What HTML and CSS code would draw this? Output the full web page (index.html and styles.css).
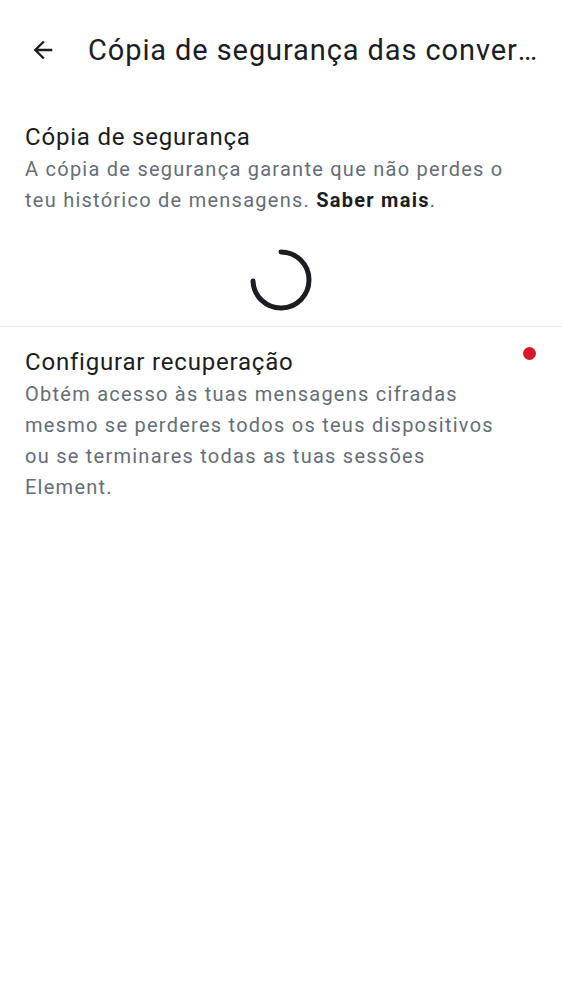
FILE: index.html
```html
<!DOCTYPE html>
<html lang="pt">
<head>
<meta charset="utf-8">
<link rel="stylesheet" href="styles.css">
</head>
<body>
<header class="topbar">
  <svg class="back" width="28" height="28" viewBox="0 0 24 24"><path d="M20 11H7.83l5.59-5.59L12 4l-8 8 8 8 1.41-1.41L7.83 13H20v-2z" fill="#1b1d22"/></svg>
  <h1 class="title">Cópia de segurança das conversas</h1>
</header>
<section class="item first">
  <div class="item-title">Cópia de segurança</div>
  <p class="item-desc">A cópia de segurança garante que não perdes o teu histórico de mensagens. <b>Saber mais</b>.</p>
</section>
<div class="spinner-wrap">
  <svg width="66" height="66" viewBox="0 0 66 66"><path d="M33 5 A28 28 0 1 1 5 34" fill="none" stroke="#1b1d22" stroke-width="5" stroke-linecap="round"/></svg>
</div>
<div class="divider"></div>
<section class="item second">
  <div class="item-title">Configurar recuperação</div>
  <p class="item-desc">Obtém acesso às tuas mensagens cifradas mesmo se perderes todos os teus dispositivos ou se terminares todas as tuas sessões Element.</p>
  <span class="dot"></span>
</section>
</body>
</html>
```
FILE: styles.css
```css
* { box-sizing: border-box; }
body {
  margin: 0;
  background: #fff;
  font-family: Roboto, "Noto Sans", sans-serif;
  color: #1b1d22;
}
.topbar {
  height: 100px;
  display: flex;
  align-items: center;
  padding: 0 20px 0 29px;
}
.back { flex: none; margin-right: 31px; }
.title {
  margin: 0;
  font-size: 29px;
  font-weight: 400;
  letter-spacing: 0.9px;
  white-space: nowrap;
  overflow: hidden;
  text-overflow: ellipsis;
  min-width: 0;
}
.item {
  position: relative;
  padding: 0 52px 0 25px;
}
.item.first { padding-top: 22px; }
.item.second { padding-top: 20px; }
.item-title {
  font-size: 24px;
  line-height: 30px;
  letter-spacing: 0.8px;
}
.item-desc {
  margin: 2px 0 0;
  font-size: 20px;
  line-height: 31.3px;
  letter-spacing: 1.25px;
  color: #656d77;
}
.item-desc b { color: #1b1d22; font-weight: 700; }
.spinner-wrap {
  display: flex;
  justify-content: center;
  padding: 30px 0 13px;
}
.divider { height: 1px; background: #e8e9ee; }
.dot {
  position: absolute;
  top: 20px;
  right: 26px;
  width: 13px;
  height: 13px;
  border-radius: 50%;
  background: #d51928;
}
```
